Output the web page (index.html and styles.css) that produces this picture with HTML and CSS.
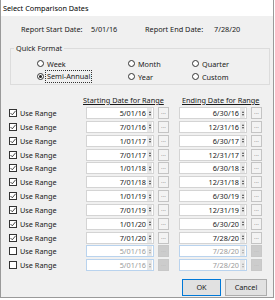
FILE: index.html
```html
<!DOCTYPE html>
<html lang="en">
<head>
    <meta charset="UTF-8">
    <title>Select Comparison Dates</title>
    <link rel="stylesheet" href="styles.css">
</head>
<body>
    <div class="dialog">
        <div class="titlebar">Select Comparison Dates</div>
        <div class="content">
            <div class="report">
                <span>Report Start Date:</span><span>5/01/16</span>
                <span>Report End Date:</span><span>7/28/20</span>
            </div>

            <fieldset class="quick">
                <legend>Quick Format</legend>
                <div class="radios">
                    <div class="radio"><span class="circle"></span><span>Week</span></div>
                    <div class="radio"><span class="circle"></span><span>Month</span></div>
                    <div class="radio"><span class="circle"></span><span>Quarter</span></div>
                    <div class="radio"><span class="circle checked"></span><span class="focus">Semi-Annual</span></div>
                    <div class="radio"><span class="circle"></span><span>Year</span></div>
                    <div class="radio"><span class="circle"></span><span>Custom</span></div>
                </div>
            </fieldset>

            <div class="range-head">
                <span class="col-title first">Starting Date for Range</span>
                <span class="col-title">Ending Date for Range</span>
            </div>

            <div class="ranges" id="ranges"></div>

            <div class="actions">
                <button class="btn default">OK</button>
                <button class="btn">Cancel</button>
            </div>
        </div>
    </div>

    <script>
        // Строки диапазонов
        const rows = [
            ['5/01/16', '6/30/16', true],
            ['7/01/16', '12/31/16', true],
            ['1/01/17', '6/30/17', true],
            ['7/01/17', '12/31/17', true],
            ['1/01/18', '6/30/18', true],
            ['7/01/18', '12/31/18', true],
            ['1/01/19', '6/30/19', true],
            ['7/01/19', '12/31/19', true],
            ['1/01/20', '6/30/20', true],
            ['7/01/20', '7/28/20', true],
            ['5/01/16', '7/28/20', false],
            ['5/01/16', '7/28/20', false]
        ];

        const check = '<svg width="6" height="6" viewBox="0 0 6 6"><polyline points="0.5,3 2.3,4.8 5.6,0.8" fill="none" stroke="#333" stroke-width="0.9"/></svg>';

        function dateField(value) {
            return `<div class="date"><span class="date-text">${value}</span>` +
                `<span class="spin"><i class="up"></i><i class="down"></i></span></div>` +
                `<div class="dots">...</div>`;
        }

        const container = document.getElementById('ranges');
        rows.forEach(([start, end, on]) => {
            const row = document.createElement('div');
            row.className = on ? 'range-row' : 'range-row off';
            row.innerHTML =
                `<div class="use"><span class="box">${on ? check : ''}</span><span>Use Range</span></div>` +
                dateField(start) + '<span></span>' + dateField(end);
            container.appendChild(row);
        });
    </script>
</body>
</html>
```

FILE: styles.css
```css
body {
    margin: 0;
    background-color: #ffffff;
    font-family: "Noto Sans", Arial, sans-serif;
    font-size: 7.3px;
    color: #1a1a1a;
}
.dialog {
    width: 274px;
    height: 298px;
    box-sizing: border-box;
    border: 1px solid #9a9a9a;
    border-top: none;
    background-color: #f0f0f0;
    display: flex;
    flex-direction: column;
}
.titlebar {
    height: 16px;
    line-height: 16px;
    padding-left: 2px;
    background-color: #ffffff;
    color: #000;
}
.content {
    flex-grow: 1;
    display: flex;
    flex-direction: column;
}
.report {
    margin: 8px 0 0 20px;
    height: 10px;
    line-height: 10px;
    display: grid;
    grid-template-columns: 70px 54px 69px auto;
}
.quick {
    margin: 9px 0 0 9px;
    width: 260px;
    box-sizing: border-box;
    padding: 0;
    border: 1px solid #dcdcdc;
}
.quick legend {
    margin-left: 3px;
    padding: 0 2px;
    line-height: 10px;
}
.radios {
    padding: 4px 0 1px 26px;
    display: grid;
    grid-template-columns: 91px 64px auto;
    grid-auto-rows: 13px;
}
.radio {
    display: flex;
    align-items: center;
    gap: 3px;
}
.circle {
    width: 7px;
    height: 7px;
    box-sizing: border-box;
    border: 1px solid #333;
    border-radius: 50%;
    background-color: #fff;
    display: flex;
    align-items: center;
    justify-content: center;
}
.circle.checked::after {
    content: "";
    width: 3px;
    height: 3px;
    border-radius: 50%;
    background-color: #222;
}
.focus {
    outline: 1px dotted #333;
    padding: 0 1px;
    margin-left: -1px;
    line-height: 11px;
}
.range-head {
    margin: 10px 0 0 82px;
    height: 10px;
    line-height: 10px;
    display: flex;
}
.col-title {
    text-decoration: underline;
}
.col-title.first {
    width: 99px;
}
.ranges {
    margin: 2px 0 0 8px;
    display: grid;
    grid-auto-rows: 12px;
    row-gap: 1.85px;
}
.range-row {
    display: grid;
    grid-template-columns: 77px 68px 11px 14px 68px 11px;
}
.range-row .dots {
    margin-left: 4px;
}
.use {
    display: flex;
    align-items: center;
    gap: 3px;
}
.box {
    width: 8px;
    height: 8px;
    box-sizing: border-box;
    border: 1px solid #333;
    background-color: #fff;
    display: flex;
    align-items: center;
    justify-content: center;
}
.date {
    box-sizing: border-box;
    border: 1px solid #d4d4d4;
    background-color: #fff;
    display: flex;
    align-items: center;
    justify-content: flex-end;
}
.date-text {
    line-height: 10px;
    color: #1a1a1a;
}
.spin {
    width: 5px;
    height: 10px;
    margin: 0 1px;
    background-color: #e8e8e8;
    display: flex;
    flex-direction: column;
    align-items: center;
    justify-content: center;
    gap: 1px;
}
.spin i {
    width: 0;
    height: 0;
    border-left: 1.5px solid transparent;
    border-right: 1.5px solid transparent;
}
.spin .up {
    border-bottom: 2px solid #444;
}
.spin .down {
    border-top: 2px solid #444;
}
.dots {
    width: 11px;
    box-sizing: border-box;
    border: 1px solid #c4c4c4;
    background-color: #f3f3f3;
    color: #8a8a8a;
    font-size: 6px;
    line-height: 8px;
    text-align: center;
}
.range-row.off .date {
    border-color: #b9d3ee;
}
.range-row.off .date-text {
    color: #9a9a9a;
}
.range-row.off .spin .up {
    border-bottom-color: #a8a8a8;
}
.range-row.off .spin .down {
    border-top-color: #a8a8a8;
}
.range-row.off .dots {
    background-color: #cccccc;
    border-color: #c8c8c8;
    color: #bdbdbd;
}
.actions {
    margin-top: 7.65px;
    padding-right: 6px;
    display: flex;
    justify-content: flex-end;
    gap: 4px;
}
.btn {
    height: 17px;
    padding: 0;
    box-sizing: border-box;
    border: 1px solid #adadad;
    background-color: #e1e1e1;
    font-family: "Noto Sans", Arial, sans-serif;
    font-size: 7.3px;
    color: #1a1a1a;
    width: 42px;
}
.btn.default {
    width: 39px;
    border-color: #0078d7;
}
```
